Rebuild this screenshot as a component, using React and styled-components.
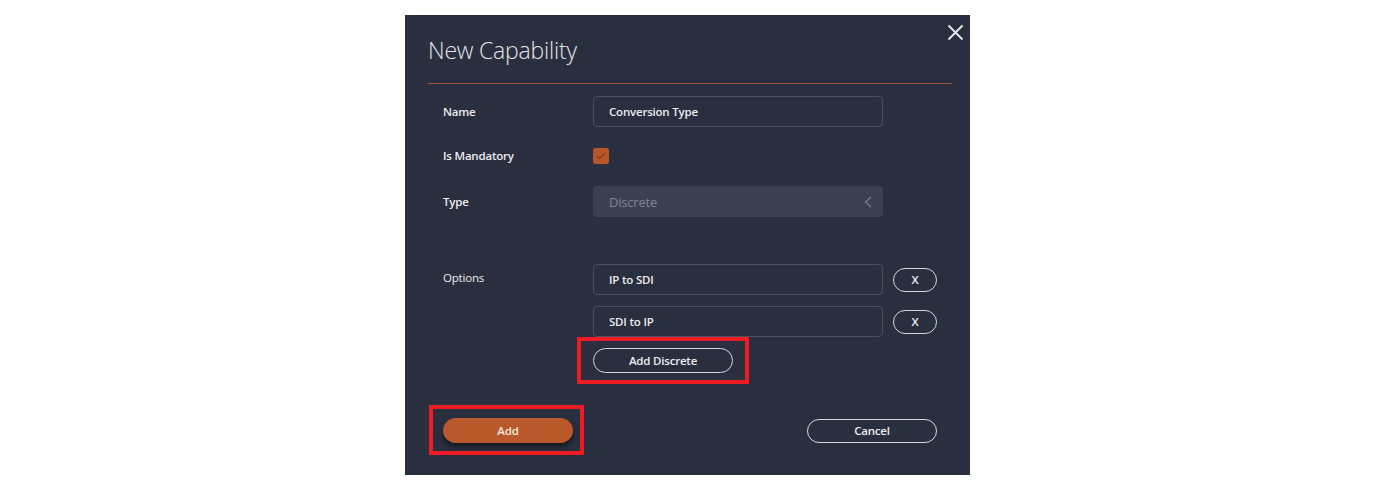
import React, { useState } from 'react';
import styled, { createGlobalStyle } from 'styled-components';

const GlobalStyle = createGlobalStyle`
  * {
    box-sizing: border-box;
  }
  body {
    margin: 0;
    background: #fff;
    font-family: "Open Sans", "Liberation Sans", sans-serif;
  }
`;

const Page = styled.div`
  padding: 15px 0 0 405px;
`;

const Dialog = styled.div`
  position: relative;
  width: 565px;
  height: 460px;
  background: #292f3f;
  color: #e8e8ea;
  padding: 0 18px 0 23px;
`;

const Header = styled.div`
  height: 69px;
  border-bottom: 1px solid #9a5238;
  padding-top: 21px;
`;

const Title = styled.h2`
  margin: 0;
  font-size: 23px;
  font-weight: 300;
  line-height: 28px;
  color: #e4e4e6;
  letter-spacing: -0.2px;
`;

const CloseButton = styled.button`
  position: absolute;
  top: 8px;
  right: 6px;
  width: 18px;
  height: 18px;
  padding: 0;
  border: none;
  background: none;
  cursor: pointer;
  display: flex;
  align-items: center;
  justify-content: center;
`;

const Form = styled.div`
  padding: 0 15px;
`;

const Row = styled.div`
  display: flex;
  align-items: ${p => (p.top ? 'flex-start' : 'center')};
  margin-top: ${p => p.gap}px;
  min-height: 31px;
`;

const Label = styled.div`
  width: 150px;
  flex-shrink: 0;
  font-size: 11.5px;
  font-weight: ${p => (p.light ? 400 : 550)};
  color: #ececee;
  padding-top: ${p => (p.top ? 6 : 0)}px;
  letter-spacing: -0.2px;
`;

const TextInput = styled.input`
  width: 290px;
  height: 31px;
  padding: 0 15px;
  border: 1px solid #4a5061;
  border-radius: 4px;
  background: transparent;
  color: #ececee;
  font-family: inherit;
  font-size: 11.5px;
  font-weight: 550;
  letter-spacing: -0.2px;
  outline: none;
`;

const Select = styled.div`
  width: 290px;
  height: 31px;
  padding: 0 11px 0 16px;
  border-radius: 4px;
  background: #3a4051;
  color: #80869a;
  font-size: 13px;
  display: flex;
  align-items: center;
  justify-content: space-between;
  letter-spacing: -0.2px;
`;

const CheckBox = styled.button`
  width: 16px;
  height: 16px;
  padding: 0;
  border: none;
  border-radius: 3px;
  background: #b9572a;
  display: flex;
  align-items: center;
  justify-content: center;
  cursor: pointer;
`;

const OptionList = styled.div`
  display: flex;
  flex-direction: column;
  align-items: flex-start;
  gap: 11px;
`;

const OptionLine = styled.div`
  display: flex;
  align-items: center;
  gap: 10px;
`;

const PillButton = styled.button`
  width: ${p => p.w}px;
  height: ${p => p.h || 25}px;
  border-radius: 14px;
  border: ${p => (p.primary ? 'none' : '1.5px solid #d6d7db')};
  background: ${p => (p.primary ? '#b9582a' : 'transparent')};
  box-shadow: ${p => (p.primary ? '0 3px 5px rgba(0, 0, 0, 0.55)' : 'none')};
  color: ${p => (p.primary ? '#f3e6de' : '#ececee')};
  font-family: inherit;
  font-size: 11.5px;
  font-weight: 550;
  letter-spacing: -0.2px;
  padding: 0;
  cursor: pointer;
`;

const Highlight = styled.div`
  position: relative;
  display: inline-flex;
  &::after {
    content: '';
    position: absolute;
    top: -${p => p.t}px;
    bottom: -${p => p.b}px;
    left: -${p => p.l}px;
    right: -${p => p.r}px;
    border: 4px solid #ed1c24;
    pointer-events: none;
  }
`;

const Footer = styled.div`
  display: flex;
  justify-content: space-between;
  align-items: center;
  margin-top: 45px;
  padding: 0 15px;
`;

const CloseIcon = () => (
  <svg width="17" height="17" viewBox="0 0 17 17">
    <path d="M1.5 1.5L15.5 15.5M15.5 1.5L1.5 15.5" stroke="#e6e6e8" strokeWidth="2" />
  </svg>
);

const CheckIcon = () => (
  <svg width="10" height="8" viewBox="0 0 10 8">
    <path d="M1 4.2L3.6 6.6L9 1.2" stroke="#4a2a1c" strokeWidth="1" fill="none" />
  </svg>
);

const ChevronIcon = () => (
  <svg width="8" height="12" viewBox="0 0 8 12">
    <path d="M7 1L1.5 6L7 11" stroke="#7c8295" strokeWidth="1.2" fill="none" />
  </svg>
);

const App = () => {
  const [name, setName] = useState('Conversion Type');
  const [mandatory, setMandatory] = useState(true);
  const [options, setOptions] = useState(['IP to SDI', 'SDI to IP']);

  const updateOption = (idx, value) => {
    setOptions(options.map((o, i) => (i === idx ? value : o)));
  };

  return (
    <>
      <GlobalStyle />
      <Page>
        <Dialog>
          <CloseButton aria-label="Close">
            <CloseIcon />
          </CloseButton>
          <Header>
            <Title>New Capability</Title>
          </Header>

          <Form>
            <Row gap={12}>
              <Label>Name</Label>
              <TextInput value={name} onChange={e => setName(e.target.value)} />
            </Row>
            <Row gap={13}>
              <Label>Is Mandatory</Label>
              <CheckBox onClick={() => setMandatory(!mandatory)}>
                {mandatory ? <CheckIcon /> : null}
              </CheckBox>
            </Row>
            <Row gap={15}>
              <Label>Type</Label>
              <Select>
                <span>Discrete</span>
                <ChevronIcon />
              </Select>
            </Row>
            <Row gap={47} top>
              <Label top light>Options</Label>
              <OptionList>
                {options.map((opt, idx) => (
                  <OptionLine key={idx}>
                    <TextInput value={opt} onChange={e => updateOption(idx, e.target.value)} />
                    <PillButton w={44} h={24} onClick={() => setOptions(options.filter((_, i) => i !== idx))}>
                      X
                    </PillButton>
                  </OptionLine>
                ))}
                <Highlight t={11} b={11} l={16} r={16}>
                  <PillButton w={140} onClick={() => setOptions([...options, ''])}>
                    Add Discrete
                  </PillButton>
                </Highlight>
              </OptionList>
            </Row>
          </Form>

          <Footer>
            <Highlight t={13} b={12} l={14} r={11}>
              <PillButton primary w={130}>Add</PillButton>
            </Highlight>
            <PillButton w={130} h={24}>Cancel</PillButton>
          </Footer>
        </Dialog>
      </Page>
    </>
  );
};

export default App;
